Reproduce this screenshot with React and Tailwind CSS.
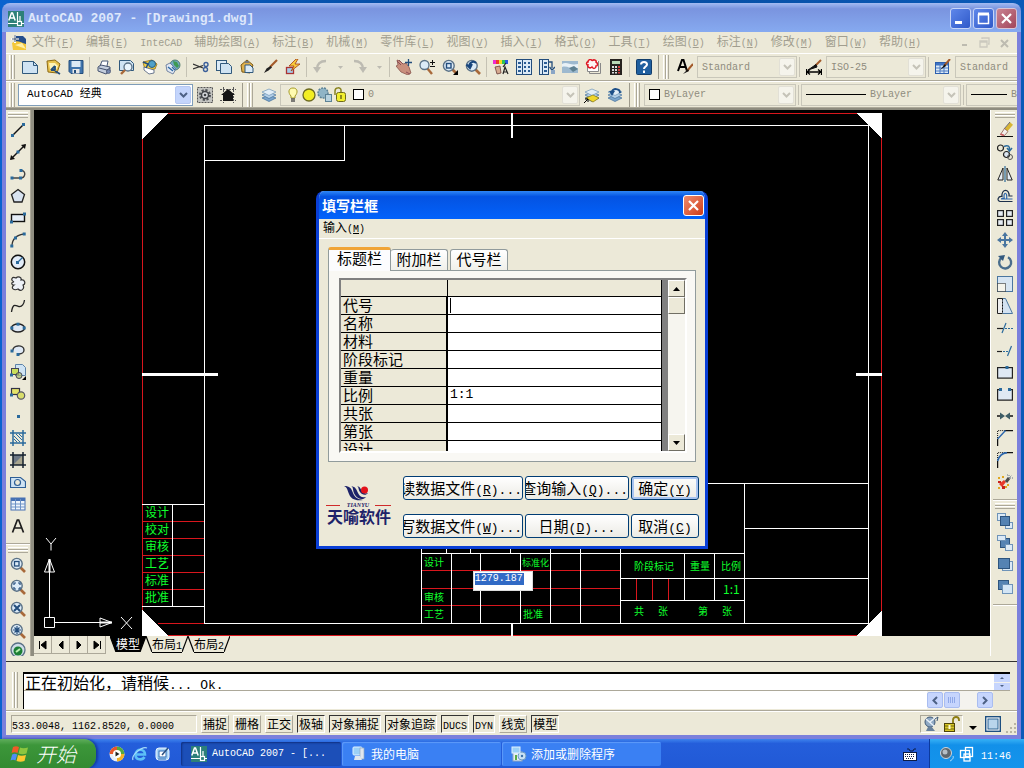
import React from 'react';

const NAVY = '#1c2f4a';
const STEEL = '#2a6a9c';

/* ---------- text helpers ---------- */

function Latin({ children, big }) {
  return (
    <span className={big ? "font-['Liberation_Mono',monospace] text-[13px]" : "font-['Liberation_Mono',monospace] text-[10px]"}>
      {children}
    </span>
  );
}

function Label({ text, hot, tail, big }) {
  return (
    <>
      {text}
      <Latin big={big}>
        (<u>{hot}</u>){tail}
      </Latin>
    </>
  );
}

/* ---------- icon helpers ---------- */

function Ico({ children }) {
  return (
    <svg viewBox="0 0 16 16" className="block size-4 shrink-0" fill="none" aria-hidden="true">
      {children}
    </svg>
  );
}

const Dot = ({ x, y }) => <rect x={x - 1.5} y={y - 1.5} width="3" height="3" fill={STEEL} />;

const Glass = ({ children }) => (
  <Ico>
    <path d="M10.5 10.5L15 15" stroke="#a8693a" strokeWidth="2.6" />
    <circle cx="6.8" cy="6.8" r="5.4" fill="#dcebf7" stroke="#5a7186" strokeWidth="1.4" />
    {children}
  </Ico>
);

const Sheet = () => <path d="M.5 2.5h11l4 4v8H.5z" fill="#cfe3f3" stroke="#31597c" />;

const Brush = () => (
  <>
    <path d="M15 1L8 8" stroke="#a35a2a" strokeWidth="2.2" />
    <path d="M8.5 7L10 8.5L6.5 11.5L2 14l2.500-4.500z" fill="#222" />
  </>
);

const Layers = () => (
  <>
    <path d="M1 11l7-3 7 3-7 3.500z" fill="#7ba5cc" stroke="#3f6d99" strokeWidth=".7" />
    <path d="M1 8l7-3 7 3-7 3.500z" fill="#b5d0e8" stroke="#3f6d99" strokeWidth=".7" />
    <path d="M1 5l7-3 7 3-7 3.500z" fill="#e2eef8" stroke="#6d93b5" strokeWidth=".7" />
  </>
);

const AppLogo = () => (
  <svg viewBox="0 0 16 16" className="block size-4 shrink-0" fill="none" aria-hidden="true">
    <rect width="16" height="16" fill="#2d8079" />
    <path d="M.8 9.500L3.500 2h1l2.700 7.500M2 7h4.500" stroke="#fff" strokeWidth="1.500" />
    <path d="M9.500 1v9M0 12.500h9M12 10V5M13 12.500h3" stroke="#fff" strokeWidth="1.200" />
    <rect x="9.500" y="10.500" width="4" height="4" fill="#2d8079" stroke="#fff" strokeWidth="1.200" />
  </svg>
);

const icons = {
  qnew: <Ico><Sheet /><path d="M11.500 2.500v4h4" stroke="#31597c" /></Ico>,
  open: (
    <Ico>
      <path d="M2 2l8-1 5 4-3 9-9-1z" fill="#e8c24e" stroke="#8d6a14" />
      <path d="M4 4h6l3 3-2 4-6-1z" fill="#fff4b8" />
      <path d="M6 11l4-4M10 7v4M6 11h4M10 12l5 3" stroke="#234d7c" strokeWidth="1.800" />
    </Ico>
  ),
  save: (
    <Ico>
      <path d="M1 1.500h14v13H3l-2-2z" fill="#3f74ad" stroke="#234d7c" />
      <rect x="3.500" y="2" width="9" height="6" fill="#dceaf6" />
      <rect x="4.500" y="10" width="7" height="4.500" fill="#e8e8e8" />
      <rect x="6" y="11" width="2" height="3" fill="#234d7c" />
    </Ico>
  ),
  plot: (
    <Ico>
      <path d="M4 7L6 2h6l-1 5" fill="#fff" stroke="#4a5a78" />
      <path d="M2 8l3-2 9 2v4l-4 3-8-3z" fill="#c4cedd" stroke="#45526e" />
      <path d="M3 9l8 2 3-2M11 11v3" stroke="#45526e" />
      <circle cx="12.500" cy="12.500" r="2" fill="#7486ad" stroke="#45526e" strokeWidth=".7" />
    </Ico>
  ),
  preview: (
    <Ico>
      <path d="M.5 1.500h11l3 3v7H.5z" fill="#cfe3f3" stroke="#31597c" />
      <circle cx="9" cy="8" r="4" fill="#e9f4fc" stroke="#5a7186" strokeWidth="1.300" />
      <path d="M6 11l-4 4" stroke="#a8693a" strokeWidth="2.400" />
    </Ico>
  ),
  publish: (
    <Ico>
      <path d="M1 3l9-2 5 4-2 5-10 1z" fill="#f5d447" stroke="#8d6a14" strokeWidth=".8" />
      <circle cx="10" cy="5" r="3.500" fill="#4fa1c9" stroke="#245b80" />
      <path d="M2 8l10 3v3l-5 1-5-4z" fill="#fff" stroke="#4a5a78" strokeWidth=".8" />
      <path d="M1 3l5 2-2 4" stroke="#234d7c" strokeWidth="1.500" />
    </Ico>
  ),
  web: (
    <Ico>
      <circle cx="10" cy="6" r="5" fill="#74a9c4" stroke="#376c58" strokeWidth=".8" />
      <path d="M8 2l4 1 2 4-2 2-3-3z" fill="#3e9a52" />
      <path d="M1 6l4-2 6 6-3 5-6-3z" fill="#e2e8f2" stroke="#576c90" strokeWidth=".8" />
      <path d="M3 8l5 4M7 8l3 3" stroke="#2b69a6" strokeWidth="1.400" />
    </Ico>
  ),
  cut: (
    <Ico>
      <path d="M0 5l10 4M0 10l10-3.500" stroke="#333" strokeWidth="1.200" />
      <circle cx="13" cy="5.500" r="2" stroke="#3b5f9a" strokeWidth="1.400" />
      <circle cx="12.500" cy="10.500" r="2" stroke="#3b5f9a" strokeWidth="1.400" />
    </Ico>
  ),
  copy: (
    <Ico>
      <rect x=".5" y="1.500" width="10" height="10" fill="#dcebf7" stroke="#31597c" />
      <path d="M4.500 4.500h8l3 3v7h-11z" fill="#cfe3f3" stroke="#31597c" />
    </Ico>
  ),
  paste: (
    <Ico>
      <path d="M2 6l6-5 6 5-3 8-8-1z" fill="#e0b04c" stroke="#7b5a18" />
      <path d="M6 6h5l3 3v4.500H6z" fill="#dcebf7" stroke="#31597c" />
      <path d="M6 3h4" stroke="#777" strokeWidth="2" />
    </Ico>
  ),
  match: <Ico><Brush /></Ico>,
  block: (
    <Ico>
      <rect x="1.500" y="8.500" width="7" height="6" fill="#a9cdea" stroke="#a33" strokeWidth="1.300" />
      <path d="M11 0L4 7h5l-3 5 9-7h-5l3-5z" fill="#f7c93a" stroke="#a33f12" strokeWidth=".8" />
    </Ico>
  ),
  undo: <Ico><path d="M13 2C7 2 4 5 4 10" stroke="#bdbbb2" strokeWidth="2.400" /><path d="M0 8h8l-4 6z" fill="#bdbbb2" /></Ico>,
  redo: <Ico><path d="M2 2c6 0 9 3 9 8" stroke="#bdbbb2" strokeWidth="2.400" /><path d="M7 8h8l-4 6z" fill="#bdbbb2" /></Ico>,
  pan: (
    <Ico>
      <path d="M1 1l3 1 3 3 3-1 3 4 2 6-3 2-7-3-5-6 2-1z" fill="#c98f7d" stroke="#7f4a44" strokeWidth=".7" />
      <path d="M1 2l4 4M3 1l4 4M10 13l4 2" stroke="#8c4c56" />
      <path d="M12.500 0v7M9 3.500h7" stroke="#234d7c" strokeWidth="1.300" />
    </Ico>
  ),
  zoomRt: (
    <Ico>
      <path d="M8 9l5 6" stroke="#a8693a" strokeWidth="2.400" />
      <circle cx="5.500" cy="6" r="4.500" fill="#dcebf7" stroke="#5a7186" strokeWidth="1.300" />
      <path d="M13.500 1v5M11 3.500h5M11 7.500h5" stroke="#111" />
    </Ico>
  ),
  zoomWin: <Glass><rect x="4.500" y="4.500" width="4.500" height="4.500" stroke="#234d7c" strokeWidth="1.400" /><path d="M16 11v5h-5z" fill="#000" /></Glass>,
  zoomPrev: <Glass><path d="M11 4C8 1 4 4 4 8M1.500 5.500L5 9l2-4" stroke="#17457c" strokeWidth="2" /></Glass>,
  props: (
    <Ico>
      <rect x="0" y="1" width="3" height="4" fill="#ee2bd3" /><rect x="3" y="1" width="3" height="4" fill="#f03a2b" />
      <rect x="6" y="1" width="3" height="4" fill="#f4dc22" /><rect x="9" y="1" width="3" height="4" fill="#2fc353" /><rect x="12" y="1" width="3" height="4" fill="#2a58e0" />
      <path d="M2 8l5-1 1 7-4 1z" fill="#d6aa90" stroke="#6b3e38" strokeWidth=".8" />
      <path d="M10 15l2-7 3 7M11 13h3M13 4l-3 4" stroke="#222" strokeWidth="1.200" />
    </Ico>
  ),
  center: (
    <Ico>
      <rect x=".5" y=".5" width="15" height="15" fill="#dceaf6" stroke="#234d7c" />
      <path d="M6.500 1v14" stroke="#234d7c" />
      <path d="M2 3h3v2H2zM2 7h3v2H2zM2 11h3v2H2zM8 3h2v2H8zM12 3h2v2h-2zM8 7h2v2H8zM12 7h2v2h-2zM8 11h2v2H8zM12 11h2v2h-2z" fill="#2a5c94" />
    </Ico>
  ),
  palettes: (
    <Ico>
      <rect x=".5" y=".5" width="9" height="15" fill="#dceaf6" stroke="#234d7c" />
      <path d="M3.500 1v14" stroke="#234d7c" />
      <path d="M5 3h3v2H5zM5 7h3v2H5zM5 11h3v2H5z" fill="#2a5c94" />
      <path d="M9 3h4v6M10.500 8l2.500 3 3-3" stroke="#234d7c" strokeWidth="1.300" />
      <path d="M12 11h4v4h-4z" fill="#8aa6c6" />
    </Ico>
  ),
  sheetset: (
    <Ico>
      <path d="M0 2h16v12H0z" fill="#9db9cf" />
      <path d="M0 5c5-3 8 2 16 0v4c-6 3-10-3-16-1z" fill="#e8f1f7" />
      <path d="M7 9l5-2 4 3-5 3z" fill="#5d8091" />
    </Ico>
  ),
  markup: (
    <Ico>
      <path d="M4.500 4v10.500h11V4" stroke="#888" />
      <path d="M2.500 2v10.500h11V2" stroke="#888" fill="#fff" />
      <path d="M3 3c0-3 4-3 4-1 1-2 5-1 4 1 2 1 2 4 0 4 0 3-3 3-4 1-2 2-5 0-4-2-2 0-2-3 0-3z" fill="#fdf3f3" stroke="#e01825" strokeWidth="1.500" />
    </Ico>
  ),
  calc: (
    <Ico>
      <rect x="2" y="0" width="12" height="16" fill="#26221f" />
      <rect x="4" y="2" width="8" height="3" fill="#b9d8b5" />
      <path d="M4 7h2v2H4zM7 7h2v2H7zM4 10h2v2H4zM7 10h2v2H7zM4 13h2v1.500H4zM7 13h2v1.500H7z" fill="#ddd" />
      <path d="M10 7h2v2h-2zM10 10h2v2h-2zM10 13h2v1.500h-2z" fill="#d43b3b" />
    </Ico>
  ),
  help: (
    <Ico>
      <rect x=".5" y=".5" width="15" height="15" rx="1" fill="#1f5f9f" stroke="#123d6b" />
      <path d="M5 5.500C5 2 11 2 11 5.500c0 2-3 2-3 4.500M8 11.500V14" stroke="#fff" strokeWidth="2" />
    </Ico>
  ),
  textStyle: (
    <Ico>
      <path d="M1 12L5 1h1.500L10 12M3 8h6" stroke="#000" strokeWidth="2" />
      <path d="M16 5l-6 7" stroke="#a35a2a" strokeWidth="2" /><path d="M11 10l-5 5 6-3z" fill="#111" />
    </Ico>
  ),
  dimStyle: (
    <Ico>
      <path d="M.5 10v6M15.500 10v6M1 13h14M4 10.500L1 13l3 2.500M12 10.500L15 13l-3 2.500" stroke="#000" strokeWidth="1.300" />
      <path d="M15 1L9 7" stroke="#a35a2a" strokeWidth="2" /><path d="M10 5.500L2 11l9-3z" fill="#111" stroke="#111" />
    </Ico>
  ),
  tableStyle: (
    <Ico>
      <rect x=".5" y="3.500" width="13" height="11" fill="#dceaf6" stroke="#2d5fae" />
      <path d="M1 4h12v2.500H1z" fill="#3d72c4" />
      <path d="M1 9h12M1 12h12M5 4v10M9 4v10" stroke="#4d7bc2" />
      <path d="M15 0l-6 7" stroke="#a35a2a" strokeWidth="2" /><path d="M10 5l-5 6 6-4z" fill="#111" />
    </Ico>
  ),
  gear: (
    <Ico>
      <rect x=".5" y=".5" width="15" height="15" fill="#c3c4c0" stroke="#555" strokeDasharray="2 1" />
      <circle cx="8" cy="8" r="4.500" stroke="#4a4d52" strokeWidth="3" strokeDasharray="2 1.500" />
      <circle cx="8" cy="8" r="3.500" fill="#d7dadd" stroke="#3f4246" strokeWidth="1.500" />
      <circle cx="8" cy="8" r="1.300" fill="#3f4246" />
    </Ico>
  ),
  home: (
    <Ico>
      <path d="M3.500 0v16M13.500 0v16M0 2.500h16M0 13.500h16" stroke="#555" strokeDasharray="2 1" />
      <path d="M1 8l7-6 7 6h-2v6H3V8z" fill="#141414" />
    </Ico>
  ),
  layers: <Ico><Layers /></Ico>,
  layerCur: <Ico><Layers /><path d="M2 11l7-3 6 3-6 4z" fill="#f0d62c" stroke="#8b7a12" strokeWidth=".7" /><path d="M0 16l4-4M1 12h3v3" stroke="#000" /></Ico>,
  layerPrev: <Ico><Layers /><path d="M13 6c0-5-7-5-8-1" stroke="#1d4f88" strokeWidth="2" /><path d="M2 4h6L5 9z" fill="#1d4f88" /></Ico>,
  bulb: <Ico><path d="M8 1c5 0 5 5 2 8v2H6V9C3 6 3 1 8 1z" fill="#fffbb0" stroke="#a59b28" /><path d="M6 12h4M6 14h4" stroke="#555" strokeWidth="1.500" /></Ico>,
  sun: <Ico><circle cx="8" cy="8" r="6" fill="#f3ee23" stroke="#6c6a20" strokeWidth="1.300" /></Ico>,
  freeze: <Ico><circle cx="6" cy="6" r="5" fill="#8fb4c6" stroke="#5c8296" strokeDasharray="2 1" strokeWidth="1.500" /><rect x="8.500" y="7.500" width="6" height="7" fill="#b7d2df" stroke="#5c8296" /></Ico>,
  lock: <Ico><path d="M2 8V4c0-4 6-4 6-1v3" stroke="#8a8420" strokeWidth="1.500" /><rect x="3.500" y="5.500" width="9" height="9" rx="2" fill="#f2ee2e" stroke="#6e6a18" /><path d="M8 8v4" stroke="#6e6a18" strokeWidth="1.500" /></Ico>,

  line: <Ico><path d="M2.500 13.500l11-11" stroke="#111" strokeWidth="1.400" /><Dot x={2.500} y={13.500} /><Dot x={13.500} y={2.500} /></Ico>,
  xline: <Ico><path d="M1 15L15 1" stroke="#111" strokeWidth="1.400" /><path d="M0 16l1-5 4 4zM16 0l-1 5-4-4z" fill="#111" /><Dot x={8} y={8} /></Ico>,
  pline: <Ico><path d="M1.500 12h9c5 0 6-7 1-7.500" stroke="#444" strokeWidth="1.400" /><Dot x={2} y={12} /><Dot x={10.500} y={12} /><Dot x={11} y={4.500} /></Ico>,
  polygon: <Ico><path d="M8 1.500l6.500 5L12 14H4L1.500 6.500z" fill="#d8e3f0" stroke="#222" strokeWidth="1.300" /></Ico>,
  rect: <Ico><rect x="1.500" y="4.500" width="13" height="7" fill="#e6eef7" stroke="#111" strokeWidth="1.400" /><Dot x={1.500} y={12} /><Dot x={14.500} y={4} /></Ico>,
  arc: <Ico><path d="M2 14C2 7 7 2.500 14.500 2" stroke="#333" strokeWidth="1.300" /><Dot x={1.800} y={14} /><Dot x={5.500} y={6} /><Dot x={14.200} y={2} /></Ico>,
  circle: <Ico><circle cx="8" cy="8" r="6.700" fill="#e3edf8" stroke="#111" strokeWidth="1.500" /><path d="M7.500 8.500l5-5" stroke={STEEL} strokeWidth="1.300" /><Dot x={7.500} y={8.500} /></Ico>,
  cloud: <Ico><path d="M4 6C0 4 2 0 6 2c2-2 6-1 5 2 4-1 5 4 2 5 2 4-2 7-5 4-4 2-8-1-4-4-3 0-3-3 0-3z" fill="#eef2f7" stroke="#333" strokeWidth="1.200" /></Ico>,
  spline: <Ico><path d="M1.500 14C3 4 6 8 9 8.500S14 6 14.500 2" stroke="#222" strokeWidth="1.300" /></Ico>,
  ellipse: <Ico><ellipse cx="8" cy="8" rx="6.500" ry="4" fill="#dfe9f5" stroke="#222" strokeWidth="1.400" /><Dot x={1.800} y={8} /><Dot x={14.200} y={8} /><Dot x={8} y={4.200} /></Ico>,
  earc: <Ico><path d="M3 8.500C2 3 14 2 14 8c0 2-2 4-5 4" fill="#dfe9f5" stroke="#333" strokeWidth="1.400" /><Dot x={2} y={9} /><Dot x={8} y={12.500} /></Ico>,
  insert: (
    <Ico>
      <path d="M5.500.5h7l3 3v8h-10z" fill="#cfe3f3" stroke="#5d83a8" />
      <rect x="1.500" y="4.500" width="7" height="6" fill="#c9de5a" stroke="#445" />
      <circle cx="9" cy="11.500" r="3" fill="#aebf6a" fillOpacity=".7" stroke="#445" /><Dot x={1.500} y={11} />
      <path d="M16 12v4h-4z" fill="#000" />
    </Ico>
  ),
  mkblock: <Ico><rect x="1.500" y="2.500" width="8" height="6" fill="#e4e36a" stroke="#334" strokeWidth="1.200" /><circle cx="11" cy="9.500" r="3.700" fill="#d8dd6a" stroke="#556" strokeWidth="1.200" /><Dot x={1.500} y={9} /></Ico>,
  point: <Ico><Dot x={8.500} y={8.500} /></Ico>,
  hatch: <Ico><path d="M3 0v16M13 0v16M0 3h16M0 13h16" stroke={STEEL} strokeWidth="1.500" /><path d="M4 6l6 6M4 9l3 3M6 4l6 6M9 4l3 3" stroke={STEEL} /></Ico>,
  gradient: <Ico><rect x="3" y="3" width="10" height="10" fill="#6d7885" /><path d="M3 13L13 3v10z" fill="#a8a58e" /><path d="M3 0v16M13 0v16M0 3h16M0 13h16" stroke="#16222f" strokeWidth="1.500" /></Ico>,
  region: <Ico><path d="M.5 3.500h10l5 4v6H.5z" fill="#cfe3f3" stroke="#2e5f96" strokeWidth="1.200" /><circle cx="7.500" cy="8.500" r="3" fill="#ece9d8" stroke="#2e5f96" strokeWidth="1.200" /></Ico>,
  table: <Ico><rect x="1" y="2" width="14" height="12" fill="#eef4fb" stroke="#4671b3" /><path d="M1 2h14v3H1z" fill="#4671b3" /><path d="M1 8h14M1 11h14M5.500 3v11M10.500 3v11" stroke="#6d92c6" /></Ico>,
  mtext: <Ico><path d="M2.500 14.500L7.300 2h1.400l4.800 12.500M4.500 10h7" stroke="#1c1c1c" strokeWidth="1.700" /></Ico>,

  zWindow: <Glass><rect x="4.500" y="4.500" width="4.500" height="4.500" stroke="#234d7c" strokeWidth="1.300" /></Glass>,
  zExt: <Glass><path d="M4 6V4h2M8 4h2v2M10 8v2H8M6 10H4V8" stroke="#234d7c" strokeWidth="1.200" /></Glass>,
  zScale: <Glass><path d="M4 4l6 6M10 4l-6 6" stroke="#234d7c" strokeWidth="2" /></Glass>,
  zCenter: <Glass><path d="M7 3v8M3 7h8M4.500 4.500l5 5M9.500 4.500l-5 5" stroke="#234d7c" strokeWidth="1.200" /></Glass>,
  zObj: <Ico><circle cx="8" cy="8" r="7" fill="#cfdde8" stroke="#5a7186" strokeWidth="1.300" /><circle cx="8" cy="9" r="4.500" fill="#1d7f35" /><path d="M6 10l4-3" stroke="#b8f0b0" strokeWidth="2" /></Ico>,

  erase: <Ico><path d="M0 14.500h16" stroke="#111" /><path d="M14.500 1.500L9 8" stroke="#d8b534" strokeWidth="4" /><path d="M13 0L7 7" stroke="#667" /><path d="M7.500 6.500l3.500 3-3.500 4-4-1z" fill="#f4efec" stroke="#8a5b4c" strokeWidth=".8" /><path d="M3.500 12l3.500 1.500" stroke="#cc5c62" strokeWidth="1.500" /></Ico>,
  copyObj: <Ico><circle cx="3.500" cy="4" r="3" stroke="#222" strokeWidth="1.200" /><circle cx="9.500" cy="10.500" r="3" fill="#dce6f1" stroke="#222" strokeWidth="1.200" /><circle cx="13" cy="13" r="2.500" stroke="#555" /><path d="M7 2.500c4-2 6 0 5.500 3M10 4l2.500 3L15 4" stroke={STEEL} strokeWidth="1.500" /></Ico>,
  mirror: <Ico><path d="M6 2v12H.8zM10 2v12h5.200z" fill="#e7edf4" stroke="#222" /><path d="M8 0v16" stroke={STEEL} strokeWidth="1.200" /></Ico>,
  offset: <Ico><path d="M15.500 13.500H3c-3.500-1-2-5.500 2-5C4 .500 13 .500 12 8h3.500" stroke={NAVY} strokeWidth="1.200" /><path d="M15.500 11H4.500c0-.8 1-.7 2.700-.6C6 3.500 10.500 3.500 9.700 10.500" stroke="#2c66ac" strokeWidth="1.200" /></Ico>,
  array: <Ico><g fill="#e7edf4" stroke="#222" strokeWidth="1.200"><rect x=".6" y=".6" width="5.800" height="5.800" /><rect x="9.600" y=".6" width="5.800" height="5.800" /><rect x=".6" y="9.600" width="5.800" height="5.800" /><rect x="9.600" y="9.600" width="5.800" height="5.800" /></g></Ico>,
  move: <Ico><path d="M8 2v12M2 8h12" stroke="#4a76a0" strokeWidth="2" /><path d="M8 0l3 4H5zM8 16l3-4H5zM0 8l4-3v6zM16 8l-4-3v6z" fill="#4a76a0" /></Ico>,
  rotate: <Ico><path d="M11 3.200a6 6 0 1 1-6.500.5" stroke="#4a6d8c" strokeWidth="2.400" /><path d="M1 2l7-1-2 6z" fill="#33597e" /></Ico>,
  scale: <Ico><rect x=".5" y=".5" width="15" height="15" fill="#d7e5f2" stroke="#4a76a0" /><path d="M.5 7.500h8v8h-8z" fill="#f5f4ec" stroke="#111" strokeDasharray="1 1" /></Ico>,
  stretch: <Ico><path d="M5.500.5h3l7 15h-10z" fill="#d3e2f1" stroke="#4a76a0" /><path d="M5.500.5h-5v15h5" fill="#eee" stroke="#222" /><path d="M5.500.5v15" stroke="#111" strokeDasharray="2 1" /></Ico>,
  trim: <Ico><path d="M0 8.500h6" stroke="#222" strokeWidth="1.200" /><path d="M5 13L9 3" stroke={STEEL} strokeWidth="1.200" /><path d="M8 8.500h8" stroke={STEEL} strokeDasharray="2 1" /></Ico>,
  extend: <Ico><path d="M0 9.500h5" stroke="#222" strokeWidth="1.200" /><path d="M6 9.500h5" stroke={STEEL} strokeDasharray="2 1" /><path d="M10.500 14l4-10" stroke={STEEL} strokeWidth="1.200" /></Ico>,
  breakPt: <Ico><rect x=".6" y="3.600" width="14.800" height="10.500" fill="#dfe9f4" stroke="#222" strokeWidth="1.200" /><rect x="8.500" y="2" width="3" height="3" fill={STEEL} /></Ico>,
  breakGap: <Ico><path d="M3 3.600H.6v10.500h14.800V3.600H13" fill="#dfe9f4" stroke="#222" strokeWidth="1.200" /><rect x="2" y="2" width="3" height="3" fill={STEEL} /><rect x="11" y="2" width="3" height="3" fill={STEEL} /></Ico>,
  join: <Ico><path d="M0 8h4M12 8h4" stroke="#111" strokeWidth="1.600" /><path d="M3 4.500L8 8l-5 3.500zM13 4.500L8 8l5 3.500z" fill="#3d5d66" /></Ico>,
  chamfer: <Ico><path d="M.6 16V9M8 .600h8" stroke="#111" strokeWidth="1.300" /><path d="M.6 8V.600H8" stroke="#111" strokeDasharray="1 1" /><path d="M.6 9L8.500.6" stroke="#2c66ac" strokeWidth="1.400" /></Ico>,
  fillet: <Ico><path d="M.6 16V9M8 .600h8" stroke="#111" strokeWidth="1.300" /><path d="M.6 8V.600H8" stroke="#111" strokeDasharray="1 1" /><path d="M.6 9C2 4 5 1 10 .600" stroke="#2c66ac" strokeWidth="1.700" /></Ico>,
  explode: <Ico><path d="M1 3h2v2H1zM5 2h2v2H5zM1 13h2v2H1zM8 12h2v2H8zM10 10h2v2h-2z" fill="#e0a722" /><path d="M2 10l5-4 2 2-4 5z" fill="#e8392b" /><path d="M1 7h3v2H1zM5 12h3v3H5z" fill="#c9201c" /><path d="M9 8l3-4" stroke="#4a4a4a" strokeWidth="3" /><path d="M12 4l3-3M12 1v3h4M10 1h2" stroke="#678" strokeDasharray="1 1" /></Ico>,
  front: <Ico><rect x=".5" y=".5" width="8" height="7" fill="#dceaf6" stroke="#6e93b8" /><rect x="8.500" y="9.500" width="7" height="6" fill="#dceaf6" stroke="#6e93b8" /><rect x="3.500" y="3.500" width="9" height="9" fill="#5583b3" stroke="#2e557f" /></Ico>,
  back: <Ico><rect x="3.500" y="3.500" width="9" height="9" fill="#5583b3" stroke="#2e557f" /><rect x=".5" y=".5" width="8" height="5" fill="#dceaf6" stroke="#6e93b8" /><rect x="8.500" y="9.500" width="7" height="6" fill="#dceaf6" stroke="#6e93b8" /></Ico>,
  above: <Ico><rect x="5.500" y="4.500" width="10" height="9" fill="#dceaf6" stroke="#6e93b8" /><rect x="1.500" y="1.500" width="11" height="10" fill="#5583b3" stroke="#2e557f" /></Ico>,
  under: <Ico><rect x="1.500" y="1.500" width="10" height="9" fill="#5583b3" stroke="#2e557f" /><rect x="5.500" y="5.500" width="10" height="9" fill="#d3e5f5" stroke="#6e93b8" /></Ico>,
};

/* ---------- toolbar parts ---------- */

function Tool({ name, wide }) {
  return (
    <button type="button" aria-label={name} className={wide ? 'flex h-6 w-6 shrink-0 items-center justify-center' : 'flex h-6 w-[23px] shrink-0 items-center justify-center'}>
      {icons[name]}
    </button>
  );
}

const Tools = ({ names }) => names.map((n) => <Tool key={n} name={n} />);

const Sep = () => (
  <span className="flex w-[5px] shrink-0 justify-center">
    <span className="h-5 w-px bg-[#c5c2b4]" />
  </span>
);

const EndSep = () => <span className="h-6 w-1 shrink-0 border-r border-[#9d9a8c]" />;

function Grip({ first }) {
  return (
    <span className={first ? 'flex h-6 w-3 shrink-0 justify-center' : 'flex h-6 w-[14px] shrink-0 justify-center'}>
      <span className="w-[3px] border-r border-l border-r-[#aca899] border-l-white" />
      <span className="w-[3px] border-r border-l border-r-[#aca899] border-l-white" />
    </span>
  );
}

const HGrip = () => (
  <span className="mt-[2px] mb-px flex w-5 flex-col">
    <span className="h-[3px] border-t border-b border-t-white border-b-[#aca899]" />
    <span className="h-[3px] border-t border-b border-t-white border-b-[#aca899]" />
  </span>
);

function Flyout({ name }) {
  return (
    <button type="button" aria-label={name} className="flex h-6 w-4 shrink-0 items-center justify-center">
      <svg viewBox="0 0 5 3" className="h-[3px] w-[5px]"><path d="M0 0h5L2.500 3z" fill="#bdbbb2" /></svg>
    </button>
  );
}

function Combo({ label, value, children, className, light }) {
  return (
    <span className={`flex h-[22px] items-center border ${light ? 'border-[#7f9db9] bg-white text-black' : 'border-[#c9c7ba] bg-[#ece9d8] text-[#8f8c7e]'} ${className}`}>
      {children}
      <select
        aria-label={label}
        className={`h-full min-w-0 flex-1 appearance-none bg-transparent pl-1 font-['Liberation_Mono','Noto_Sans_CJK_SC',monospace] ${light ? 'text-[11px]' : 'text-[10px]'}`}
      >
        <option>{value}</option>
      </select>
      <span className={`mr-px flex h-[18px] w-4 shrink-0 items-center justify-center rounded-xs border ${light ? 'border-[#b6c8f2] bg-[#c4d5fc]' : 'border-[#e2e0d6] bg-[#f5f4ec]'}`}>
        <svg viewBox="0 0 9 6" className="h-[6px] w-[9px]" fill="none"><path d="M1 1l3.500 3.500L8 1" stroke={light ? '#4d6185' : '#c5c3b8'} strokeWidth="2" /></svg>
      </span>
    </span>
  );
}

const Swatch = () => <span className="ml-1 size-[11px] shrink-0 border border-black bg-white" />;

/* ---------- top of the window ---------- */

const menus = [
  ['文件', 'F'], ['编辑', 'E'], ['InteCAD'], ['辅助绘图', 'A'], ['标注', 'B'], ['机械', 'M'], ['零件库', 'L'], ['视图', 'V'],
  ['插入', 'I'], ['格式', 'O'], ['工具', 'T'], ['绘图', 'D'], ['标注', 'N'], ['修改', 'M'], ['窗口', 'W'], ['帮助', 'H'],
];

function TitleBar() {
  return (
    <header className="flex h-[29px] items-center rounded-t-lg bg-linear-to-b from-[#a3bbf2] via-[#7a94df] via-20% to-[#86aaf0] pt-[2px] pr-1 pl-[6px]">
      <AppLogo />
      <h1 className="ml-1 flex-1 font-['Liberation_Mono',monospace] text-[13px] font-bold text-[#dde7fb]">AutoCAD 2007 - [Drawing1.dwg]</h1>
      <span className="flex gap-[2px]">
        <button type="button" aria-label="Minimize" className="size-[21px] rounded-[3px] border border-[#c7d5f7] bg-linear-to-br from-[#5f87ea] to-[#2f59c9]">
          <svg viewBox="0 0 19 19" className="size-full"><path d="M4 12h7v3H4z" fill="#fff" /></svg>
        </button>
        <button type="button" aria-label="Restore" className="size-[21px] rounded-[3px] border border-[#c7d5f7] bg-linear-to-br from-[#5f87ea] to-[#2f59c9]">
          <svg viewBox="0 0 19 19" className="size-full" fill="none"><path d="M4.500 5v9.500h10V5M4 5h11" stroke="#fff" strokeWidth="1.500" /><path d="M4 5h11" stroke="#fff" strokeWidth="3" /></svg>
        </button>
        <button type="button" aria-label="Close" className="size-[21px] rounded-[3px] border border-[#d9c4d4] bg-linear-to-br from-[#c98291] to-[#a2465c]">
          <svg viewBox="0 0 19 19" className="size-full"><path d="M5 5l9 9M14 5l-9 9" stroke="#fff" strokeWidth="2.200" /></svg>
        </button>
      </span>
    </header>
  );
}

function MenuBar() {
  return (
    <nav className="flex h-[21px] items-center overflow-hidden bg-[#ece9d8] pl-[5px] text-[12px] leading-4 whitespace-nowrap text-[#a19e8f]">
      <Ico>
        <path d="M3 1h9l3 3v11H3z" fill="#234d8c" /><path d="M1 8c5-4 9 0 14 1v6H2z" fill="#f4c83a" /><path d="M4 10l7-2 4 6z" fill="#fff0a8" /><path d="M4 0v8M0 4h8" stroke="#fff" strokeWidth="2" /><path d="M4 0v7M1 4h7" stroke="#1d3558" strokeWidth=".8" />
      </Ico>
      <span className="ml-[5px] flex flex-1 gap-3">
        {menus.map(([text, hot], i) => (
          <button type="button" key={i}>{hot ? <Label text={text} hot={hot} /> : <Latin>{text}</Latin>}</button>
        ))}
      </span>
      <span className="flex gap-1 pr-1">
        <button type="button" aria-label="Minimize drawing"><Ico><path d="M5 10h5" stroke="#bdbbb0" strokeWidth="2" /></Ico></button>
        <button type="button" aria-label="Restore drawing"><Ico><path d="M5 4V3h7v6h-1M3 6h7v6H3zM3 7h7" stroke="#cbc9be" strokeWidth="1.300" /></Ico></button>
        <button type="button" aria-label="Close drawing"><Ico><path d="M4 5l7 7M11 5l-7 7" stroke="#bdbbb0" strokeWidth="2" /></Ico></button>
      </span>
    </nav>
  );
}

const barClass = 'flex items-center overflow-hidden border-t border-b border-t-white border-b-[#aca899] bg-[#ece9d8]';

function StandardBar() {
  return (
    <div className={`h-7 ${barClass}`}>
      <Grip first />
      <Tools names={['qnew', 'open', 'save']} />
      <Sep />
      <Tools names={['plot', 'preview', 'publish', 'web']} />
      <Sep />
      <Tools names={['cut', 'copy', 'paste', 'match', 'block']} />
      <Sep />
      <Tool name="undo" /><Flyout name="Undo list" />
      <Tool name="redo" /><Flyout name="Redo list" />
      <Sep />
      <Tools names={['pan', 'zoomRt', 'zoomWin', 'zoomPrev']} />
      <Sep />
      <Tools names={['props', 'center', 'palettes', 'sheetset', 'markup', 'calc']} />
      <Sep />
      <Tool name="help" />
      <EndSep />
      <Grip />
      <Tool name="textStyle" wide />
      <Combo label="Text style" value="Standard" className="w-[100px] shrink-0" />
      <Sep />
      <Tool name="dimStyle" wide />
      <Combo label="Dimension style" value="ISO-25" className="w-[100px] shrink-0" />
      <Sep />
      <Tool name="tableStyle" wide />
      <Combo label="Table style" value="Standard" className="w-[100px] shrink-0" />
    </div>
  );
}

function LayerBar() {
  return (
    <div className={`h-[27px] ${barClass}`}>
      <Grip first />
      <Combo label="Workspace" value="AutoCAD 经典" light className="w-[175px] shrink-0 pl-1" />
      <Tools names={['gear', 'home']} />
      <EndSep />
      <Grip />
      <Tool name="layers" />
      <Combo label="Layer" value="0" className="w-[300px] shrink-0 pl-1">
        {icons.bulb}{icons.sun}{icons.freeze}{icons.lock}
        <Swatch />
      </Combo>
      <Tools names={['layerCur', 'layerPrev']} />
      <EndSep />
      <Grip />
      <Combo label="Color" value="ByLayer" className="w-[152px] shrink-0"><Swatch /></Combo>
      <Sep />
      <Combo label="Linetype" value="ByLayer" className="w-[160px] shrink-0"><span className="ml-1 h-px w-[60px] shrink-0 bg-black" /></Combo>
      <Sep />
      <Combo label="Lineweight" value="ByLayer" className="w-[152px] shrink-0"><span className="ml-1 h-px w-[36px] shrink-0 bg-black" /></Combo>
    </div>
  );
}

/* ---------- side toolbars ---------- */

const drawTools = ['line', 'xline', 'pline', 'polygon', 'rect', 'arc', 'circle', 'cloud', 'spline', 'ellipse', 'earc', 'insert', 'mkblock', 'point', 'hatch', 'gradient', 'region', 'table', 'mtext'];
const zoomTools = ['zWindow', 'zExt', 'zScale', 'zCenter'];
const modifyTools = ['erase', 'copyObj', 'mirror', 'offset', 'array', 'move', 'rotate', 'scale', 'stretch', 'trim', 'extend', 'breakPt', 'breakGap', 'join', 'chamfer', 'fillet', 'explode'];
const orderTools = ['front', 'back', 'above', 'under'];

const SideTools = ({ names }) =>
  names.map((n) => (
    <button type="button" key={n} aria-label={n} className="flex h-[22px] w-full shrink-0 items-center justify-center">{icons[n]}</button>
  ));

const HSep = () => <span className="mt-[6px] h-[2px] w-full shrink-0 border-t border-b border-t-[#aca899] border-b-white" />;

/* ---------- drawing area ---------- */

function Drawing() {
  const W = { stroke: '#fff', fill: 'none' };
  const R = { stroke: '#d8161d', fill: 'none' };
  return (
    <svg viewBox="34 110 956 526" className="block h-auto w-full bg-black" shapeRendering="crispEdges" role="img" aria-label="Drawing1.dwg">
      <rect x="142.500" y="113.500" width="739" height="522" {...R} />
      <path d="M142 113h26l-26 26zM882 113h-26l26 26zM142 636h26l-26-26zM882 636h-26l26-26z" fill="#fff" />
      <path d="M158 623.500h46M142 521.500h62M142 538.500h62M142 555.500h62M142 572.500h62M142 589.500h62" {...R} />
      <path d="M204.500 125.500h664v498h-664zM204.500 160.500h140v-35" {...W} />
      <path d="M511 113h2v25h-2zM511 624h2v12h-2zM142 373h76v3h-76zM856 373h26v3h-26z" fill="#fff" />
      <path d="M142 504.500h62M172.500 504v102M142 606.500h62" {...W} />
      <path d="M421 570.500h199M421 588.500h199M421 605.500h199M636.500 578v22M652.500 578v22M668.500 578v22" {...R} />
      <path d="M700 483.500h168M744.500 483v140M744 528.500h124M620 578.500h248M620 600.500h124M421 553.500h323M421.500 545v78M451.500 553v70M480.500 553v70M520.500 553v70M550.500 545v78M580.500 545v78M620.500 545v78M684.500 553v47M714.500 553v47M446.500 545v8M470.500 545v8M510.500 545v8" {...W} />
      <g stroke="#fff" fill="none" shapeRendering="auto">
        <path d="M44.500 617.500h10v10h-10zM49.500 617v-45M55 622.500h46M49.500 559l-5 13h10zM112 622.500l-12-4.500v9z" />
        <path d="M49.500 559v13M112 622.500h-12" strokeWidth="2" />
        <path d="M46 538l5 6 5-6M51 544v6.500M121 617l11 12M132 617l-11 12" />
      </g>
      <g fill="#0fff2c" fontFamily="'Noto Sans CJK SC', sans-serif" fontSize="12">
        <text x="145" y="517">设计</text>
        <text x="145" y="534">校对</text>
        <text x="145" y="551">审核</text>
        <text x="145" y="568">工艺</text>
        <text x="145" y="585">标准</text>
        <text x="145" y="602">批准</text>
        <g fontSize="10">
          <text x="424" y="566">设计</text>
          <text x="424" y="601">审核</text>
          <text x="424" y="618">工艺</text>
          <text x="522" y="566" fontSize="9">标准化</text>
          <text x="523" y="618">批准</text>
          <text x="634" y="570">阶段标记</text>
          <text x="690" y="570">重量</text>
          <text x="721" y="570">比例</text>
          <text x="634" y="615">共</text>
          <text x="658" y="615">张</text>
          <text x="698" y="615">第</text>
          <text x="722" y="615">张</text>
        </g>
        <text x="723" y="594">1:1</text>
      </g>
    </svg>
  );
}

/* ---------- dialog ---------- */

const fields = [
  ['代号', ''], ['名称', ''], ['材料', ''], ['阶段标记', ''], ['重量', ''], ['比例', '1:1'], ['共张', ''], ['第张', ''], ['设计', ''],
];

function XpButton({ className = '', primary, clip, children }) {
  return (
    <button
      type="button"
      className={`h-6 overflow-hidden rounded-[3px] border border-[#003c74] text-[15px] leading-[22px] whitespace-nowrap ${primary ? 'bg-linear-to-b from-[#fdfdfb] to-[#ecebe5] inset-ring-2 inset-ring-[#a9c4f0]' : 'bg-linear-to-b from-white to-[#ecebe5]'} ${className}`}
    >
      <span className={clip ? 'flex items-baseline justify-end' : 'flex items-baseline justify-center'}>{children}</span>
    </button>
  );
}

const ScrollBtn = ({ label, d }) => (
  <button type="button" aria-label={label} className="flex h-[17px] w-full shrink-0 items-center justify-center border border-t-white border-r-[#716f64] border-b-[#716f64] border-l-white bg-[#ece9d8]">
    <svg viewBox="0 0 7 4" className="h-1 w-[7px]"><path d={d} fill="#000" /></svg>
  </button>
);

function TitleDialog() {
  return (
    <section role="dialog" aria-label="填写栏框" className="absolute top-[81px] left-1/2 w-[392px] -translate-x-1/2 overflow-hidden rounded-t-lg border-x-3 border-b-3 border-[#0a3fd6] bg-[#ece9d8] text-black">
      <div className="-mx-[3px] flex h-7 items-center justify-between bg-linear-to-b from-[#2f86f5] via-[#0453e2] via-20% to-[#0262fb] pr-1 pl-[6px]">
        <h2 className="text-[14px] font-bold text-white">填写栏框</h2>
        <button type="button" aria-label="关闭" className="size-[21px] rounded-[3px] border border-white bg-linear-to-br from-[#ee8a6c] to-[#cf3a12]">
          <svg viewBox="0 0 19 19" className="size-full"><path d="M5 5l9 9M14 5l-9 9" stroke="#fff" strokeWidth="2.200" /></svg>
        </button>
      </div>
      <div className="flex h-5 items-center border-b border-white pl-1 text-[12px] leading-4">
        <button type="button"><Label text="输入" hot="M" /></button>
      </div>

      <div className="px-[9px] pt-2">
        <div role="tablist" className="flex items-end text-[15px] leading-4">
          <button type="button" role="tab" aria-selected="true" className="relative -mb-px h-6 w-[63px] rounded-t-[3px] border border-t-3 border-b-0 border-[#919b9c] border-t-[#f0a436] bg-[#fcfcfe] pb-[5px]">标题栏</button>
          <button type="button" role="tab" aria-selected="false" className="h-[21px] w-[57px] rounded-t-[3px] border border-b-0 border-l-0 border-[#919b9c] bg-linear-to-b from-white to-[#f0f0ea] pb-[2px]">附加栏</button>
          <button type="button" role="tab" aria-selected="false" className="ml-[2px] h-[21px] w-[58px] rounded-t-[3px] border border-b-0 border-[#919b9c] bg-linear-to-b from-white to-[#f0f0ea] pb-[2px]">代号栏</button>
        </div>
        <div className="border border-[#919b9c] bg-[#f9f8f4] pt-[7px] pr-2 pb-2 pl-[10px]">
          <div className="flex h-[175px] overflow-hidden border-2 border-t-[#808080] border-r-white border-b-white border-l-[#808080] bg-[#808080]">
            <div className="min-w-0 flex-1 overflow-hidden">
              <table className="w-full table-fixed border-collapse text-[15px] leading-4">
                <thead>
                  <tr className="h-4 border-b border-black bg-[#ece9d8]">
                    <th className="h-4 w-[106px] border-r border-black p-0" aria-label="项目" />
                    <th className="h-4 border-r border-black p-0" aria-label="内容" />
                  </tr>
                </thead>
                <tbody>
                  {fields.map(([name, value], i) => (
                    <tr key={name} className="h-[18px] border-b border-black">
                      <th scope="row" className="h-[18px] border-r-2 border-black bg-[#ece9d8] p-0 pl-[2px] text-left font-normal"><label htmlFor={`f${i}`} className="block h-4 leading-4">{name}</label></th>
                      <td className="h-[18px] border-r border-black bg-white p-0">
                        <span className="flex h-[17px] items-center pl-[2px]">
                          {i === 0 && <span className="h-[15px] w-px shrink-0 bg-black" />}
                          <input id={`f${i}`} defaultValue={value} className="h-4 min-w-0 flex-1 bg-transparent font-['Liberation_Mono',monospace] text-[13px] outline-none" />
                        </span>
                      </td>
                    </tr>
                  ))}
                </tbody>
              </table>
            </div>
            <div className="ml-[6px] flex w-[17px] shrink-0 flex-col bg-[#f6f5ef]">
              <ScrollBtn label="向上" d="M0 4h7L3.500 0z" />
              <button type="button" aria-label="滚动" className="mb-auto h-[17px] w-full border border-t-white border-r-[#716f64] border-b-[#716f64] border-l-white bg-[#ece9d8]" />
              <ScrollBtn label="向下" d="M0 0h7L3.500 4z" />
            </div>
          </div>
        </div>
      </div>

      <div className="flex items-start justify-between pt-[14px] pr-[6px] pb-2 pl-[6px]">
        <div className="mt-2 w-[68px] text-center text-[#1d2369]">
          <svg viewBox="0 0 68 24" className="h-6 w-full" fill="none" aria-hidden="true">
            <path d="M19 2c6 0 7 2 9 7s5 6 10 7c-8 1-12-1-14-6S22 3 19 2z" fill="#1d2369" />
            <path d="M26 2c5 1 5 3 7 7s4 5 8 4c-2 3-8 3-11-2S29 3 26 2z" fill="#1d2369" />
            <path d="M32 2c4 1 3 3 5 5s3 3 6 2c-2 3-6 2-8-1S34 3 32 2z" fill="#1d2369" />
            <circle cx="39.500" cy="6" r="3.500" fill="#e3131b" />
            <path d="M1 21.500h14M50 21.500h16" stroke="#cf2a2a" />
            <text x="33" y="23" textAnchor="middle" fontFamily="'Liberation Serif', serif" fontSize="6" fontStyle="italic" fontWeight="700" fill="#1d2369">TIANYU</text>
          </svg>
          <p className="text-[16px] leading-4 font-bold whitespace-nowrap">天喻软件</p>
        </div>
        <div className="grid grid-cols-[120px_104px_68px] gap-x-[2px] gap-y-[14px]">
          <XpButton clip><Label big text="读数据文件" hot="R" tail="..." /></XpButton>
          <XpButton clip><Label big text="查询输入" hot="Q" tail="..." /></XpButton>
          <XpButton primary><Label big text="确定" hot="Y" /></XpButton>
          <XpButton clip><Label big text="写数据文件" hot="W" tail="..." /></XpButton>
          <XpButton><Label big text="日期" hot="D" tail="..." /></XpButton>
          <XpButton><Label big text="取消" hot="C" /></XpButton>
        </div>
      </div>
    </section>
  );
}

/* ---------- layout tabs ---------- */

const Slant = ({ d, fill }) => (
  <svg viewBox="0 0 6 16" className="h-4 w-[6px] shrink-0"><path d={d} fill={fill} stroke="#000" strokeWidth="1.200" /></svg>
);

function LayoutTabs() {
  const navs = [['First', 'M1.500 1v8M8 1v8L3 5z'], ['Previous', 'M7 1v8L3 5z'], ['Next', 'M3 1v8l4-4z'], ['Last', 'M2 1v8l5-4zM8.500 1v8']];
  return (
    <div className="flex h-5 items-start bg-[#ece9d8] text-[12px] leading-4">
      {navs.map(([n, d]) => (
        <button type="button" key={n} aria-label={n} className="flex h-[18px] w-[18px] items-center justify-center border-r border-b border-[#aca899]">
          <svg viewBox="0 0 10 10" className="size-[10px]"><path d={d} fill="#000" stroke="#000" /></svg>
        </button>
      ))}
      <span className="w-1" />
      <Slant d="M0 0l6 16V0z" fill="#000" />
      <button type="button" className="bg-black text-white">模型</button>
      <Slant d="M6 0L0 16V0z" fill="#000" />
      <Slant d="M0 0l6 16" fill="none" />
      <button type="button" className="h-[17px] border-b border-black">布局<Latin>1</Latin></button>
      <Slant d="M6 0L0 16" fill="none" />
      <Slant d="M0 0l6 16" fill="none" />
      <button type="button" className="h-[17px] border-b border-black">布局<Latin>2</Latin></button>
      <Slant d="M6 0L0 16" fill="none" />
    </div>
  );
}

/* ---------- command line & status ---------- */

const lunaBtn = 'flex items-center justify-center rounded-xs border border-[#a9bdf0] bg-[#c6d5fd]';

function CommandLine() {
  return (
    <section className="border-t-[5px] border-b border-t-[#ece9d8] border-b-[#aca899] bg-[#ece9d8]">
      <div className="flex border-t border-[#333] pt-[10px] pr-[7px] pb-px">
        <span className="flex h-9 w-[17px] justify-center">
          <span className="w-[3px] border-r border-l border-r-[#aca899] border-l-white" />
          <span className="w-[3px] border-r border-l border-r-[#aca899] border-l-white" />
        </span>
        <div className="min-w-0 flex-1 border-t-2 border-l border-black bg-white">
          <div className="flex h-[17px] border-b border-[#aca899]">
            <p className="flex-1 pl-px text-[16px] leading-4 whitespace-nowrap">正在初始化，请稍候<Latin big>... Ok.</Latin></p>
            <span className="flex w-4 flex-col gap-px bg-[#f2f1ea]">
              <button type="button" aria-label="Scroll up" className="flex h-2 items-center justify-center bg-[#c6d5fd]"><svg viewBox="0 0 4 2" className="h-[2px] w-1"><path d="M0 2h4L2 0z" fill="#4d6185" /></svg></button>
              <button type="button" aria-label="Scroll down" className="flex h-2 items-center justify-center bg-[#c6d5fd]"><svg viewBox="0 0 4 2" className="h-[2px] w-1"><path d="M0 0h4L2 2z" fill="#4d6185" /></svg></button>
            </span>
          </div>
          <div className="flex h-[18px]">
            <input aria-label="Command" className="min-w-0 flex-1 bg-white text-[13px] outline-none" />
            <span className="flex w-[66px] items-center gap-px bg-[#f4f3ee]">
              <button type="button" aria-label="Scroll left" className={`${lunaBtn} size-4`}><svg viewBox="0 0 6 9" className="h-[9px] w-[6px]" fill="none"><path d="M5 1L1.500 4.500 5 8" stroke="#4d6185" strokeWidth="2" /></svg></button>
              <button type="button" aria-label="Scroll thumb" className={`${lunaBtn} size-4`}><svg viewBox="0 0 8 6" className="h-[6px] w-2"><path d="M.5 0v6M2.500 0v6M4.500 0v6M6.500 0v6" stroke="#8fa8e8" /></svg></button>
              <button type="button" aria-label="Scroll right" className={`${lunaBtn} ml-auto size-4`}><svg viewBox="0 0 6 9" className="h-[9px] w-[6px]" fill="none"><path d="M1 1l3.500 3.500L1 8" stroke="#4d6185" strokeWidth="2" /></svg></button>
            </span>
            <span className="w-[17px] bg-[#ece9d8]" />
          </div>
        </div>
      </div>
    </section>
  );
}

const modes = [
  ['捕捉', false], ['栅格', false], ['正交', false], ['极轴', true], ['对象捕捉', true], ['对象追踪', true],
  ['DUCS', true], ['DYN', true], ['线宽', false], ['模型', true],
];

function StatusBar() {
  return (
    <footer className="flex h-6 items-center border-t border-white bg-[#ece9d8] pl-[5px] text-[12px] leading-4 text-black">
      <p className="h-[18px] w-[186px] border border-t-[#aca899] border-r-white border-b-white border-l-[#aca899] whitespace-nowrap"><Latin>533.0048, 1162.8520, 0.0000</Latin></p>
      <span className="ml-1 flex gap-1">
        {modes.map(([name, on]) => (
          <button
            type="button"
            key={name}
            aria-pressed={on}
            className={`h-[18px] border px-px whitespace-nowrap ${on ? 'border-t-[#333] border-r-white border-b-white border-l-[#333]' : 'border-t-white border-r-[#aca899] border-b-[#aca899] border-l-white'}`}
          >
            {/^[A-Z]/.test(name) ? <Latin>{name}</Latin> : name}
          </button>
        ))}
      </span>
      <span className="ml-auto flex h-[18px] w-[43px] items-center justify-around border border-t-[#aca899] border-r-white border-b-white border-l-[#aca899]">
        <Ico><circle cx="7" cy="6" r="5" fill="#8fa9c4" stroke="#3e5774" /><path d="M3 3l8 7M7 6l6-5" stroke="#e8f0f8" strokeWidth="1.500" /><path d="M5 11l-2 4h9l-4-5z" fill="#67809b" /><path d="M12 3l3-2-1 4" stroke="#3e5774" /></Ico>
        <Ico><path d="M9 8V4c0-4 6-4 6 0v1" stroke="#8d7d12" strokeWidth="1.800" /><rect x=".5" y="7.500" width="10" height="8" fill="#d6c626" stroke="#4e4508" /><path d="M1 10h9M1 13h9" stroke="#71660f" /><path d="M5.500 9v4" stroke="#fffbd0" strokeWidth="2" /></Ico>
      </span>
      <button type="button" aria-label="Status bar menu" className="mt-2 ml-[5px] flex w-[9px] justify-center"><svg viewBox="0 0 8 4" className="h-1 w-2"><path d="M0 0h8L4 4z" fill="#000" /></svg></button>
      <button type="button" aria-label="Clean screen" className="mr-1 ml-[8px]">
        <Ico><rect x=".700" y=".700" width="14.600" height="14.600" fill="#fff" stroke="#1d4f80" strokeWidth="1.400" /><rect x="3" y="3" width="10" height="10" fill="#b9d5ec" stroke="#2e6493" /></Ico>
      </button>
      <svg viewBox="0 0 12 12" className="mt-2 size-3"><path d="M9 1h2v2H9zM9 5h2v2H9zM9 9h2v2H9zM5 5h2v2H5zM5 9h2v2H5zM1 9h2v2H1z" fill="#b8b4a2" /></svg>
    </footer>
  );
}

/* ---------- taskbar ---------- */

function Taskbar() {
  return (
    <nav className="flex h-[30px] items-stretch bg-linear-to-b from-[#3f83ee] via-[#245edb] via-15% to-[#2159d6] text-[12px] text-white">
      <button type="button" className="flex w-24 shrink-0 items-center gap-[6px] rounded-r-xl bg-linear-to-b from-[#5fae5c] via-[#3c963a] via-20% to-[#338a31] pl-[10px] shadow-[2px_0_3px_#12389c]">
        <svg viewBox="0 0 20 18" className="h-[18px] w-5" aria-hidden="true">
          <path d="M3 2c2-1 4-1 6 0L7.500 8c-2-1-4-1-6 0z" fill="#f05a28" />
          <path d="M10 2.500c2 1 5 1 8 0L16.500 8.500c-3 1-5 1-8 0z" fill="#8cc63f" />
          <path d="M2.200 9.500c2-1 3-1 5 0L5.500 15.500c-2-1-3-1-5 0z" fill="#4f8df5" />
          <path d="M8 10c2 1 5 1 8 0l-1.500 6c-3 1-5 1-8 0z" fill="#fdc82f" />
        </svg>
        <span className="text-[20px] leading-6 font-light italic">开始</span>
      </button>
      <div className="flex items-center gap-[7px] pl-[13px]">
        <button type="button" aria-label="Media Player">
          <Ico><circle cx="8" cy="8" r="7.500" fill="#e7eefb" /><path d="M8 .5A7.500 7.500 0 0 0 .5 8H5l3-4z" fill="#e8562b" /><path d="M15.500 8A7.500 7.500 0 0 0 8 .5v4L11 8z" fill="#55a83d" /><path d="M8 15.500A7.500 7.500 0 0 0 15.500 8H11l-3 4z" fill="#f3b228" /><circle cx="8" cy="8" r="4" fill="#fff" /><path d="M6.500 5.500v5l4-2.500z" fill="#222" /></Ico>
        </button>
        <button type="button" aria-label="Internet Explorer">
          <Ico><path d="M4.500 8.500h8.500C13 2.500 4 2 3.500 8.500c0 6 7 6 9 2.500" stroke="#5cc0f7" strokeWidth="2.600" /><path d="M1 14C-1 9 10 0 15 2" stroke="#a9defa" strokeWidth="1.200" /></Ico>
        </button>
        <button type="button" aria-label="Show desktop">
          <Ico><rect x="1" y="2" width="13" height="12" rx="3" fill="#a9d3f5" stroke="#e9f5ff" /><rect x="4" y="5" width="7" height="6" fill="#fff" stroke="#2d6cb5" /><path d="M7 9l6-7" stroke="#2b4e7e" strokeWidth="1.500" /><path d="M3 13h8" stroke="#2d6cb5" /></Ico>
        </button>
      </div>
      <div className="ml-[10px] flex flex-1 items-center gap-px leading-4">
        <button type="button" className="flex h-6 w-[160px] items-center gap-[5px] rounded-xs bg-[#1c4fb8] pl-[10px] shadow-[inset_1px_1px_2px_#0f2f80]">
          <AppLogo />
          <Latin>AutoCAD 2007 - [...</Latin>
        </button>
        <button type="button" className="flex h-6 w-[159px] items-center gap-1 rounded-xs bg-[#3a80f3] pl-[9px] shadow-[inset_1px_1px_1px_#5f9bfa]">
          <Ico><rect x="2" y="1" width="9" height="8" rx="1" fill="#9bd0f7" stroke="#dff1ff" /><rect x="9" y="2" width="4" height="11" fill="#dfe6ee" stroke="#8fa6c0" strokeWidth=".7" /><path d="M4 10h5l2 4H3z" fill="#dfe6ee" /></Ico>
          我的电脑
        </button>
        <button type="button" className="flex h-6 w-[159px] items-center gap-1 rounded-xs bg-[#3a80f3] pl-[9px] shadow-[inset_1px_1px_1px_#5f9bfa]">
          <Ico><rect x="2" y="6" width="9" height="9" fill="#e6edf5" stroke="#8fa6c0" /><circle cx="11" cy="10" r="4" fill="#c9e2f5" stroke="#6f9cc4" /><circle cx="11" cy="10" r="1.200" fill="#3a70a8" /><rect x="1" y="1" width="8" height="6" fill="#9bd0f7" stroke="#dff1ff" /><path d="M4 9h2v5H4z" fill="#5cad46" /></Ico>
          添加或删除程序
        </button>
      </div>
      <button type="button" aria-label="Input method" className="mr-3 flex items-center">
        <svg viewBox="0 0 14 13" className="h-[13px] w-[14px]" fill="none"><path d="M4 1h2l1 2h3l1-2h2" stroke="#0b1c46" /><rect x=".5" y="4.500" width="13" height="8" fill="#fff" stroke="#0b1c46" /><path d="M2 6.500h10M2 8.500h10M3 10.500h8" stroke="#0b1c46" strokeDasharray="1 1" /></svg>
      </button>
      <div className="flex w-[95px] items-center gap-[3px] border-l border-[#0b3a9e] bg-linear-to-b from-[#35b1f5] via-[#1290e9] via-20% to-[#1494ec] pl-[10px]">
        <Ico><circle cx="6" cy="7" r="5.500" fill="#5f666c" stroke="#cfd6dc" /><circle cx="5" cy="6" r="2.500" fill="#b6bec5" /><path d="M13 10c1 2-1 4-3 5" stroke="#bfe3fb" /></Ico>
        <Ico><rect x="1.500" y="4.500" width="9" height="7" stroke="#fff" strokeWidth="1.300" /><rect x="6.500" y="1.500" width="7" height="9" stroke="#fff" strokeWidth="1.300" /><rect x="5" y="8" width="6" height="7" stroke="#fff" strokeWidth="1.300" /></Ico>
        <time className="ml-[3px]"><Latin>11:46</Latin></time>
      </div>
    </nav>
  );
}

export default function App() {
  return (
    <div className="flex min-h-screen flex-col overflow-hidden bg-linear-to-r from-[#0a63cf] via-[#064a9c] to-[#0a5ab8] font-['Noto_Sans_CJK_SC',sans-serif] text-black">
      <div className="flex flex-1 flex-col pt-[3px] pr-[3px] pl-[2px]">
        <TitleBar />
        <div className="flex flex-1 flex-col border-x-4 border-b-4 border-[#7b80dc] bg-[#ece9d8]">
          <MenuBar />
          <StandardBar />
          <LayerBar />
          <main className="flex flex-1 border-t-2 border-[#8f8d80]">
            <aside className="flex w-[25px] shrink-0 flex-col items-center border-r border-[#aca899]">
              <HGrip />
              <SideTools names={drawTools} />
              <HSep />
              <HGrip />
              <SideTools names={zoomTools} />
              <button type="button" aria-label="zObj" className="flex h-[14px] items-start overflow-hidden">{icons.zObj}</button>
            </aside>
            <div className="min-w-0 flex-1 border-l-3 border-[#8f8d80]">
              <div className="relative">
                <Drawing />
                <TitleDialog />
                <div className="absolute top-[87.6%] left-[45.9%] flex h-5 w-[60px] items-start border border-[#dcdcdc] bg-white p-px">
                  <input aria-label="Coordinate" defaultValue="1279.187" className="h-3 w-[49px] bg-[#316ac5] font-['Liberation_Mono',monospace] text-[10px] text-white outline-none" />
                </div>
              </div>
              <LayoutTabs />
            </div>
            <aside className="flex w-[27px] shrink-0 flex-col items-center border-l border-white pl-[2px]">
              <HGrip />
              <SideTools names={modifyTools} />
              <HSep />
              <HGrip />
              <SideTools names={orderTools} />
              <HSep />
            </aside>
          </main>
          <CommandLine />
          <StatusBar />
        </div>
      </div>
      <Taskbar />
    </div>
  );
}
